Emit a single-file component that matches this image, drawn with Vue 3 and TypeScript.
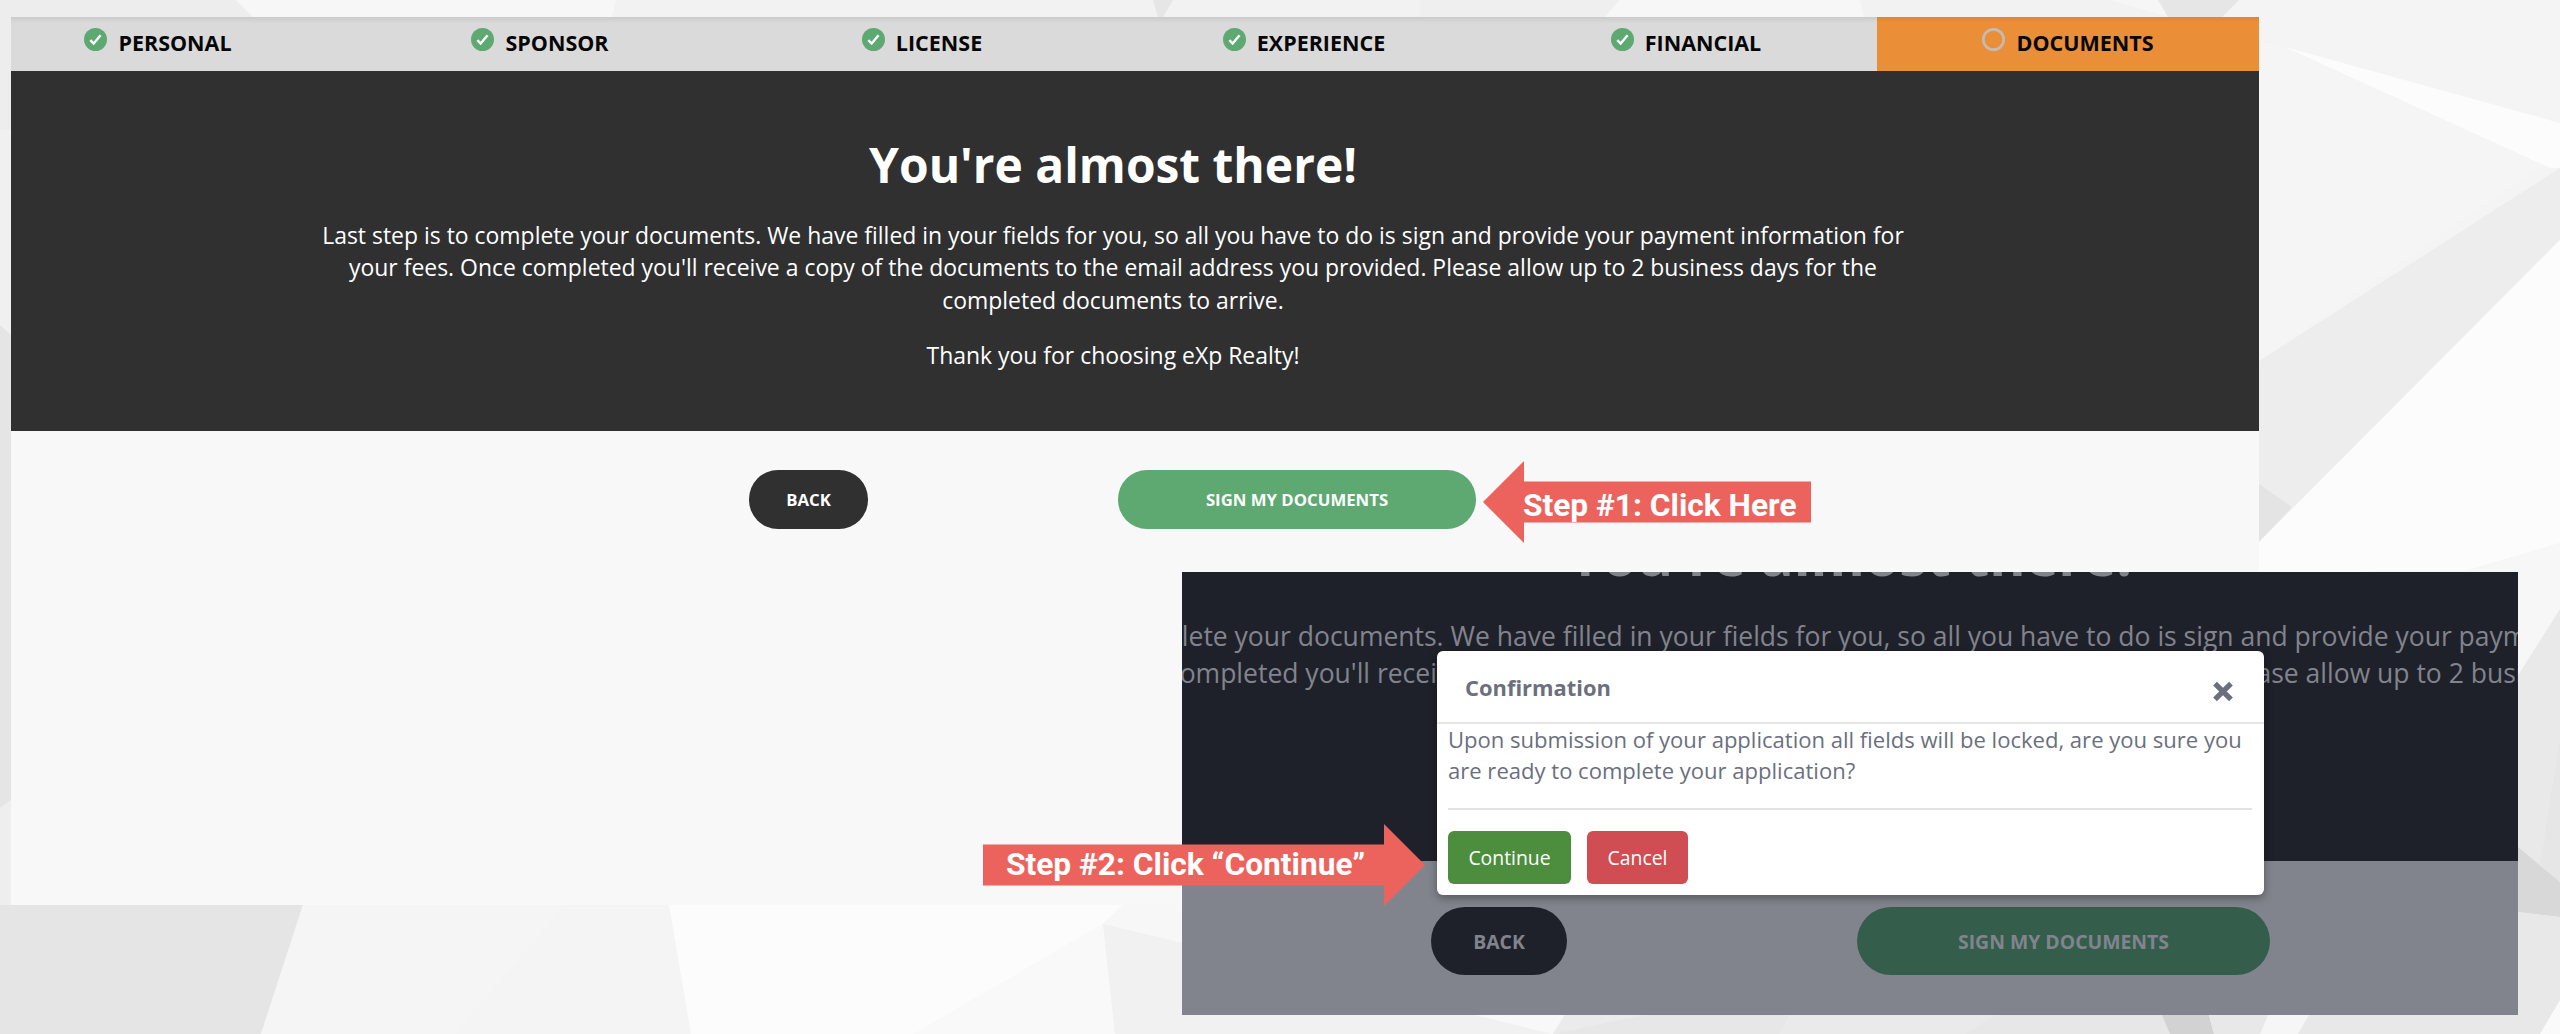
<template>
  <div class="page">
    <svg class="backdrop" viewBox="0 0 2560 1034" aria-hidden="true">
      <polygon
        v-for="(facet, index) in facets"
        :key="index"
        :points="facet.points"
        :fill="facet.fill"
      />
    </svg>

    <main class="application">
      <ul class="steps">
        <li v-for="step in steps" :key="step.label" class="step" :class="{ active: !step.done }">
          <svg v-if="step.done" class="step_icon" viewBox="0 0 24 24">
            <circle cx="12" cy="12" r="12" fill="#5da971" />
            <path d="M6.6 12.6l3.5 3.6 7.2-8.6" fill="none" stroke="#fff" stroke-width="2.5" />
          </svg>
          <svg v-else class="step_icon" viewBox="0 0 24 24">
            <circle cx="12" cy="12" r="10.6" fill="none" stroke="#c3bcb6" stroke-width="2.8" />
          </svg>
          <span>{{ step.label }}</span>
        </li>
      </ul>
      <section class="hero">
        <h1>{{ title }}</h1>
        <p class="intro">
          <span v-for="line in intro" :key="line">{{ line }}</span>
        </p>
        <p class="thanks">Thank you for choosing eXp Realty!</p>
      </section>
      <div class="actions">
        <button class="pill back">BACK</button>
        <button class="pill sign">SIGN MY DOCUMENTS</button>
      </div>
    </main>

    <section class="preview">
      <div class="preview_hero">
        <h2>{{ title }}</h2>
        <p>
          <span v-for="line in intro.slice(0, 2)" :key="line">{{ line }}</span>
        </p>
      </div>
      <div class="preview_actions">
        <button class="pill back">BACK</button>
        <button class="pill sign">SIGN MY DOCUMENTS</button>
      </div>

      <div class="modal">
        <header class="modal_header">
          <h3>Confirmation</h3>
          <svg class="close" viewBox="0 0 20 20" @click="confirmed = false">
            <path d="M2.4 2.4L17.6 17.6M17.6 2.4L2.4 17.6" fill="none" stroke="#6b6f7e" stroke-width="5" />
          </svg>
        </header>
        <div class="modal_body">
          <p>
            Upon submission of your application all fields will be locked, are you sure you<br />
            are ready to complete your application?
          </p>
          <hr />
          <div class="modal_buttons">
            <button class="btn continue" @click="confirmed = true">Continue</button>
            <button class="btn cancel" @click="confirmed = false">Cancel</button>
          </div>
        </div>
      </div>
    </section>

    <div class="callout callout_one">
      <svg viewBox="0 0 328 82"><path d="M0 41L41 0V20.5H328V61.5H41V82Z" fill="#ec635e" /></svg>
      <span>Step #1: Click Here</span>
    </div>
    <div class="callout callout_two">
      <svg viewBox="0 0 442 82"><path d="M442 41L401 0V20.5H0V61.5H401V82Z" fill="#ec635e" /></svg>
      <span>Step #2: Click “Continue”</span>
    </div>
  </div>
</template>

<script setup lang="ts">
import { ref } from "vue";

interface Step {
  label: string;
  done: boolean;
}

interface Facet {
  points: string;
  fill: string;
}

const confirmed = ref<boolean>(false);

const title = "You're almost there!";

const intro = [
  "Last step is to complete your documents. We have filled in your fields for you, so all you have to do is sign and provide your payment information for",
  "your fees. Once completed you'll receive a copy of the documents to the email address you provided. Please allow up to 2 business days for the",
  "completed documents to arrive.",
];

const steps: Step[] = [
  { label: "PERSONAL", done: true },
  { label: "SPONSOR", done: true },
  { label: "LICENSE", done: true },
  { label: "EXPERIENCE", done: true },
  { label: "FINANCIAL", done: true },
  { label: "DOCUMENTS", done: false },
];

const facets: Facet[] = [
  // top strip
  { points: "0,0 236,0 253,17 253,140 0,140", fill: "#ededed" },
  { points: "236,0 616,0 612,17 253,17", fill: "#f7f7f7" },
  { points: "616,0 1420,0 1420,17 612,17", fill: "#f2f2f2" },
  { points: "1153,0 1173,0 1163,17 1158,17", fill: "#e6e6e6" },
  { points: "1420,0 1620,0 1605,17 1420,17", fill: "#efefef" },
  { points: "1620,0 1860,0 1864,17 1605,17", fill: "#f7f7f7" },
  { points: "1860,0 2160,0 2170,17 1864,17", fill: "#f2f2f2" },
  { points: "2110,0 2160,0 2170,17", fill: "#f6f6f6" },
  { points: "2158,0 2239,0 2222,17 2168,17", fill: "#e6e6e6" },
  // left edge
  { points: "0,130 11,130 11,335 0,325", fill: "#f0f0f1" },
  { points: "0,325 11,335 11,800 0,808", fill: "#e5e5e5" },
  { points: "0,808 11,800 11,906 0,906", fill: "#eeeeee" },
  // right side
  { points: "2259,0 2560,0 2560,150 2259,38", fill: "#f4f4f4" },
  { points: "2259,38 2560,150 2560,153 2259,361", fill: "#f5f5f5" },
  { points: "2285,47 2560,123 2560,168 2550,168", fill: "#fcfcfc" },
  { points: "2259,361 2560,168 2560,240 2259,542", fill: "#ededed" },
  { points: "2259,484 2292,507 2259,542", fill: "#e4e4e4" },
  { points: "2560,240 2560,543 2465,571 2375,571 2240,580 2259,542", fill: "#fcfcfc" },
  { points: "2560,543 2560,609 2517,677 2517,571 2465,571", fill: "#f7f7f7" },
  { points: "2560,609 2560,882 2517,846 2517,677", fill: "#e9e9e9" },
  { points: "2560,740 2560,882 2540,864", fill: "#e6e6e6" },
  { points: "2517,846 2560,882 2560,917 2517,912", fill: "#d8d8d8" },
  { points: "2517,912 2560,917 2560,1034 2517,1034", fill: "#e8e8e8" },
  { points: "2560,1000 2560,1034 2540,1034", fill: "#fafafa" },
  // bottom strip
  { points: "0,905 303,905 261,1034 0,1034", fill: "#e5e5e5" },
  { points: "303,905 565,905 455,1034 261,1034", fill: "#f5f5f5" },
  { points: "565,905 669,905 691,1034 455,1034", fill: "#f4f4f4" },
  { points: "669,905 1123,905 1103,924 914,1034 691,1034", fill: "#fcfcfc" },
  { points: "1103,924 1115,1034 914,1034", fill: "#f9f9f9" },
  { points: "1123,905 1182,905 1182,943 1103,924", fill: "#f7f7f7" },
  { points: "1103,924 1182,943 1182,1015 1480,1015 1550,1034 1115,1034", fill: "#f1f1f1" },
  { points: "1475,1015 1565,1015 1553,1034", fill: "#f8f8f8" },
  { points: "1565,1015 1790,1015 1780,1034 1553,1034", fill: "#e7e7e7" },
  { points: "1565,1015 1645,1015 1553,1034", fill: "#ebebeb" },
  { points: "1790,1015 2165,1015 2170,1034 1780,1034", fill: "#eaeaea" },
  { points: "1995,1015 2163,1015 2170,1034 1965,1034", fill: "#e7e7e7" },
  { points: "2162,1015 2209,1015 2214,1034 2170,1034", fill: "#d2d2d2" },
  { points: "2209,1015 2268,1015 2260,1034 2214,1034", fill: "#e8e8e8" },
  { points: "2268,1015 2309,1015 2298,1034 2262,1034", fill: "#f6f6f6" },
  { points: "2309,1015 2518,1015 2518,1034 2298,1034", fill: "#e8e8e8" },
];
</script>

<style>
body {
  margin: 0;
  overflow: hidden;
}
</style>

<style scoped>
* {
  box-sizing: border-box;
  margin: 0;
  padding: 0;
}

.page {
  position: relative;
  width: 2560px;
  height: 1034px;
  padding: 17px 0 0 11px;
  overflow: hidden;
  background: #f4f4f4;
  font-family: "Open Sans", "Noto Sans", sans-serif;
}

.backdrop {
  position: absolute;
  inset: 0;
  width: 100%;
  height: 100%;
}

.application {
  position: relative;
  width: 2248px;
  height: 888px;
  background: #f8f8f8;
}

/* step bar */
.steps {
  display: flex;
  justify-content: flex-end;
  height: 54px;
  overflow: hidden;
  list-style: none;
  background: linear-gradient(#cbcbcb, #dadada 6px);
}

.step {
  flex: 0 0 382px;
  display: flex;
  justify-content: center;
  gap: 11px;
  padding-top: 11px;
  color: #060606;
  font-size: 21.5px;
  font-weight: 700;
  line-height: 29px;
}

.step.active {
  background: linear-gradient(#df8734, #ea8e37 5px);
}

.step_icon {
  width: 23px;
  height: 23px;
}

/* dark banner */
.hero {
  display: flex;
  flex-direction: column;
  align-items: center;
  height: 360px;
  padding: 64px 44px 0 0;
  color: #fff;
  background: #303030;
}

.hero h1 {
  font-size: 47.9px;
  font-weight: 700;
  line-height: 60px;
}

.intro {
  display: flex;
  flex-direction: column;
  align-items: center;
  margin-top: 23.5px;
}

.intro,
.thanks {
  font-size: 22.95px;
  line-height: 32.7px;
  white-space: nowrap;
}

.thanks {
  margin-top: 22px;
}

.actions {
  display: flex;
  gap: 250px;
  padding: 39px 0 0 738px;
}

.pill {
  border: 0;
  border-radius: 29px;
  color: #fff;
  font-family: inherit;
  font-size: 16.75px;
  font-weight: 700;
}

.back {
  width: 119px;
  height: 59px;
  background: #303030;
}

.sign {
  width: 358px;
  height: 59px;
  background: #5da971;
}

/* second window with the dialog */
.preview {
  position: absolute;
  left: 1182px;
  top: 572px;
  width: 1336px;
  height: 443px;
  overflow: hidden;
  background: #82848d;
}

.preview_hero {
  display: flex;
  flex-direction: column;
  align-items: center;
  height: 289px;
  color: #82848d;
  background: #1f212a;
}

.preview_hero h2 {
  margin-top: -52px;
  font-size: 55.4px;
  font-weight: 700;
  line-height: 70px;
}

.preview_hero p {
  display: flex;
  flex-direction: column;
  align-items: center;
  margin-top: 28px;
  font-size: 26.5px;
  line-height: 37.4px;
  white-space: nowrap;
}

.preview_actions {
  display: flex;
  gap: 290px;
  padding: 46px 0 0 249px;
}

.preview .pill {
  height: 68px;
  border-radius: 34px;
  color: #82848d;
  font-size: 19.4px;
}

.preview .back {
  width: 136px;
  background: #1f212a;
}

.preview .sign {
  width: 413px;
  background: #345e4b;
}

.modal {
  position: absolute;
  left: 255px;
  top: 79px;
  width: 827px;
  height: 244px;
  border-radius: 6px;
  color: #6b6f7e;
  background: #fff;
  box-shadow: 0 3px 8px rgba(0, 0, 0, 0.35);
}

.modal_header {
  display: flex;
  justify-content: space-between;
  align-items: flex-start;
  height: 73px;
  padding: 22px 30px 0 28px;
  border-bottom: 2px solid #e6e6e6;
}

.modal_header h3 {
  font-size: 21.9px;
  font-weight: 700;
  line-height: 30px;
}

.close {
  width: 22px;
  height: 21px;
  margin-top: 8px;
}

.modal_body {
  padding: 0 12px 0 11px;
}

.modal_body p {
  font-size: 22.05px;
  line-height: 31px;
  white-space: nowrap;
}

.modal_body hr {
  height: 2px;
  margin-top: 22px;
  border: 0;
  background: #e2e2e2;
}

.modal_buttons {
  display: flex;
  gap: 16px;
  margin-top: 21px;
}

.btn {
  height: 53px;
  border: 0;
  border-radius: 6px;
  color: #fff;
  font-family: inherit;
  font-size: 19.4px;
}

.continue {
  width: 123px;
  background: #4c8e3e;
}

.cancel {
  width: 101px;
  background: #d04d53;
}

/* red instruction arrows */
.callout {
  position: absolute;
  display: grid;
  align-items: center;
  height: 82px;
  color: #fff;
  font-family: Roboto, "Liberation Sans", sans-serif;
  font-size: 31.7px;
  font-weight: 700;
  white-space: nowrap;
}

.callout > * {
  grid-area: 1 / 1;
}

.callout_one {
  left: 1483px;
  top: 461px;
  width: 328px;
}

.callout_one span {
  padding: 7px 0 0 40px;
}

.callout_two {
  left: 983px;
  top: 824px;
  width: 442px;
}

.callout_two span {
  padding: 0 0 1px 23px;
}
</style>
